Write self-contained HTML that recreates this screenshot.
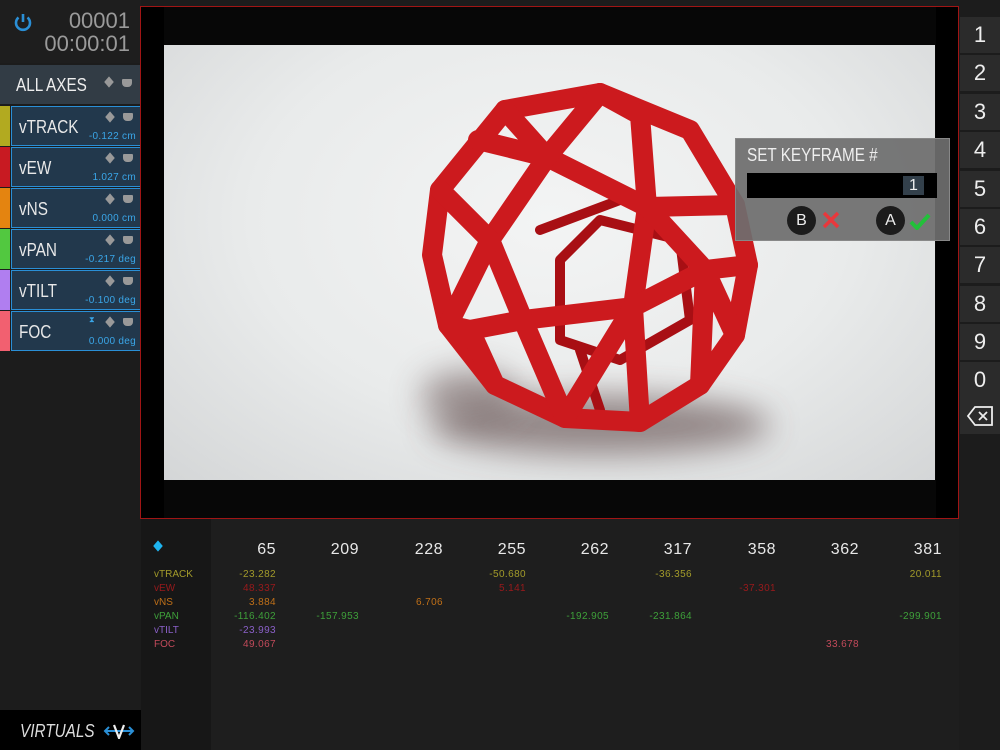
<!DOCTYPE html>
<html><head><meta charset="utf-8"><style>
*{margin:0;padding:0;box-sizing:border-box}
body{width:1000px;height:750px;background:#1c1c1c;position:relative;overflow:hidden;font-family:"Liberation Sans",sans-serif;}
.a{position:absolute}
.row{position:absolute;left:0;width:141px;height:40px}
.row .bar{position:absolute;left:0;top:0;width:10px;height:40px}
.row .box{position:absolute;left:11px;top:0;width:130px;height:40px;background:#22384c;border:1px solid #2a8fd6}
.row .lbl{position:absolute;left:7px;top:10px;color:#e8e8e8;font-size:18px;transform:scaleX(.85);transform-origin:left}
.row .val{position:absolute;right:4px;top:24px;color:#3aa6e8;font-size:10px;letter-spacing:.3px}
.dia{position:absolute;width:8px;height:8px;background:#999;transform:scaleX(.85) rotate(45deg)}
.sh{position:absolute;width:10px;height:8px;background:#999;border-radius:1px 1px 4px 4px}
.key{position:absolute;left:960px;width:40px;height:36px;background:#2b2b2b;color:#eee;font-size:22px;text-align:center;line-height:36px}
.h{position:absolute;top:541px;color:#e8e8e8;font-size:16px;text-align:right;width:60px;letter-spacing:.5px}
.d{position:absolute;font-size:10px;text-align:right;width:80px;letter-spacing:.4px}
.l{position:absolute;left:154px;font-size:10px}
</style></head><body>
<div class="a" style="left:0;top:0;width:141px;height:63px;background:#1e1e1e"></div>
<svg class="a" style="left:12px;top:12px" width="22" height="22" viewBox="0 0 22 22"><path d="M6.5 5.5A7 7 0 1 0 15.5 5.5" fill="none" stroke="#2a8fd6" stroke-width="2.6"/><line x1="11" y1="2" x2="11" y2="10" stroke="#2a8fd6" stroke-width="2.6"/></svg>
<div class="a" style="right:870px;top:9px;color:#9a9a9a;font-size:22px;line-height:23px;text-align:right;width:100px">00001<br>00:00:01</div>
<div class="a" style="left:0;top:65px;width:141px;height:39px;background:#323c45"></div>
<div class="a" style="left:16px;top:75px;color:#eee;font-size:18px;transform:scaleX(.85);transform-origin:left">ALL AXES</div>
<div class="dia" style="left:105px;top:78px"></div><div class="sh" style="left:122px;top:79px"></div>

<div class="row" style="top:106px"><div class="bar" style="background:#b2aa20"></div><div class="box"><div class="lbl">vTRACK</div><div class="val">-0.122 cm</div><div class="dia" style="left:94px;top:6px"></div><div class="sh" style="left:111px;top:6px"></div></div></div>
<div class="row" style="top:147px"><div class="bar" style="background:#c81a22"></div><div class="box"><div class="lbl">vEW</div><div class="val">1.027 cm</div><div class="dia" style="left:94px;top:6px"></div><div class="sh" style="left:111px;top:6px"></div></div></div>
<div class="row" style="top:188px"><div class="bar" style="background:#e48410"></div><div class="box"><div class="lbl">vNS</div><div class="val">0.000 cm</div><div class="dia" style="left:94px;top:6px"></div><div class="sh" style="left:111px;top:6px"></div></div></div>
<div class="row" style="top:229px"><div class="bar" style="background:#52c840"></div><div class="box"><div class="lbl">vPAN</div><div class="val">-0.217 deg</div><div class="dia" style="left:94px;top:6px"></div><div class="sh" style="left:111px;top:6px"></div></div></div>
<div class="row" style="top:270px"><div class="bar" style="background:#b07ef0"></div><div class="box"><div class="lbl">vTILT</div><div class="val">-0.100 deg</div><div class="dia" style="left:94px;top:6px"></div><div class="sh" style="left:111px;top:6px"></div></div></div>
<div class="row" style="top:311px"><div class="bar" style="background:#f26070"></div><div class="box"><div class="lbl">FOC</div><div class="val">0.000 deg</div><div class="a" style="left:77px;top:5px;color:#3aa6e8;font-size:8px;line-height:6px">⧗</div><div class="dia" style="left:94px;top:6px"></div><div class="sh" style="left:111px;top:6px"></div></div></div>

<div class="a" style="left:0;top:710px;width:141px;height:40px;background:#000"></div>
<div class="a" style="left:20px;top:721px;color:#ddd;font-size:18px;font-style:italic;transform:scaleX(.85);transform-origin:left">VIRTUALS</div>
<svg class="a" style="left:103px;top:723px" width="32" height="16" viewBox="0 0 32 16"><line x1="2" y1="8" x2="30" y2="8" stroke="#2a8fd6" stroke-width="2"/><path d="M6 4L2 8L6 12M26 4L30 8L26 12" fill="none" stroke="#2a8fd6" stroke-width="2"/><path d="M11 2L16 15L21 2" fill="none" stroke="#eee" stroke-width="2.2"/></svg>

<div class="a" style="left:140px;top:6px;width:819px;height:513px;border:1px solid #a01515;background:#000"></div>
<div class="a" style="left:164px;top:7px;width:772px;height:511px;background:#070707"></div>
<div class="a" style="left:164px;top:45px;width:771px;height:435px;background:radial-gradient(ellipse at 50% 40%,#f3f4f4 0%,#e9ebeb 55%,#d4d6d7 100%);overflow:hidden">
<svg width="771" height="435" viewBox="164 45 771 435">
<defs><filter id="b" x="-50%" y="-200%" width="200%" height="500%"><feGaussianBlur stdDeviation="16"/></filter></defs>
<ellipse cx="600" cy="425" rx="170" ry="30" fill="#5a4444" opacity=".6" filter="url(#b)"/>
<ellipse cx="470" cy="395" rx="50" ry="25" fill="#5a4444" opacity=".5" filter="url(#b)"/>
<g fill="none" stroke="#a80f14" stroke-width="10" stroke-linejoin="round" stroke-linecap="round">
<path d="M560,260 L600,220 L680,240 L690,320 L620,360 L560,340 Z M540,230 L620,200 M580,350 L600,410"/>
</g>
<g fill="none" stroke="#cc1a1e" stroke-width="20" stroke-linejoin="round" stroke-linecap="round">
<polygon points="440,190 505,110 600,93 690,130 735,205 748,265 735,335 700,385 640,422 565,418 495,385 448,325 432,255"/>
<polygon points="547,157 647,207 633,307 523,320 490,240"/>
<path d="M505,110 L547,157 L600,93 M600,93 L640,115 L647,207 L735,205 M647,207 L705,270 L735,335 M633,307 L705,270 L748,265 M633,307 L640,422 M633,307 L565,418 M523,320 L565,418 M523,320 L470,330 L448,325 M490,240 L440,190 M490,240 L448,325 M470,330 L495,385 M705,270 L700,385 M547,157 L478,140"/>
</g>
</svg></div>

<div class="a" style="left:735px;top:138px;width:215px;height:103px;background:rgba(110,110,110,.93);border:1px solid #888"></div>
<div class="a" style="left:747px;top:145px;color:#eee;font-size:18px;transform:scaleX(.85);transform-origin:left">SET KEYFRAME #</div>
<div class="a" style="left:747px;top:173px;width:190px;height:25px;background:#000"></div>
<div class="a" style="left:903px;top:176px;width:21px;height:19px;background:#33404b;color:#eee;font-size:16px;text-align:center;line-height:19px">1</div>
<div class="a" style="left:787px;top:206px;width:29px;height:29px;border-radius:50%;background:#1c1c1c;color:#eee;font-size:16px;text-align:center;line-height:29px">B</div>
<svg class="a" style="left:822px;top:211px" width="18" height="18"><path d="M2 2L16 16M16 2L2 16" stroke="#e8383c" stroke-width="3.5"/></svg>
<div class="a" style="left:876px;top:206px;width:29px;height:29px;border-radius:50%;background:#1c1c1c;color:#eee;font-size:16px;text-align:center;line-height:29px">A</div>
<svg class="a" style="left:909px;top:212px" width="22" height="18"><path d="M2 10L8 16L20 3" fill="none" stroke="#22c03a" stroke-width="4"/></svg>

<div class="a" style="left:959px;top:0;width:41px;height:750px;background:#1c1c1c"></div>
<div class="key" style="top:17px">1</div><div class="key" style="top:55px">2</div><div class="key" style="top:94px">3</div><div class="key" style="top:132px">4</div><div class="key" style="top:171px">5</div><div class="key" style="top:209px">6</div><div class="key" style="top:247px">7</div><div class="key" style="top:286px">8</div><div class="key" style="top:324px">9</div><div class="key" style="top:362px">0</div>
<div class="key" style="top:398px"><svg width="28" height="22" viewBox="0 0 28 22" style="margin-top:7px"><path d="M9 2H26V20H9L2 11Z" fill="none" stroke="#eee" stroke-width="1.8"/><path d="M13 7L21 15M21 7L13 15" stroke="#eee" stroke-width="1.8"/></svg></div>

<div class="a" style="left:141px;top:519px;width:70px;height:231px;background:#171717"></div>
<div class="a" style="left:211px;top:519px;width:748px;height:231px;background:#1e1e1e"></div>
<div class="a" style="left:154px;top:542px;width:8px;height:8px;background:#1eb4f0;transform:scaleX(.85) rotate(45deg)"></div>
<div class="h" style="left:216px">65</div><div class="h" style="left:299px">209</div><div class="h" style="left:383px">228</div><div class="h" style="left:466px">255</div><div class="h" style="left:549px">262</div><div class="h" style="left:632px">317</div><div class="h" style="left:716px">358</div><div class="h" style="left:799px">362</div><div class="h" style="left:882px">381</div>
<div class="l" style="top:569px;color:#a39b2a">vTRACK</div><div class="l" style="top:583px;color:#9a1a1c">vEW</div><div class="l" style="top:597px;color:#c07018">vNS</div><div class="l" style="top:611px;color:#3ea03a">vPAN</div><div class="l" style="top:625px;color:#8a60c8">vTILT</div><div class="l" style="top:639px;color:#c24a5a">FOC</div>
<div class="d" style="left:196px;top:569px;color:#a39b2a">-23.282</div><div class="d" style="left:446px;top:569px;color:#a39b2a">-50.680</div><div class="d" style="left:612px;top:569px;color:#a39b2a">-36.356</div><div class="d" style="left:862px;top:569px;color:#a39b2a">20.011</div>
<div class="d" style="left:196px;top:583px;color:#9a1a1c">48.337</div><div class="d" style="left:446px;top:583px;color:#9a1a1c">5.141</div><div class="d" style="left:696px;top:583px;color:#9a1a1c">-37.301</div>
<div class="d" style="left:196px;top:597px;color:#c07018">3.884</div><div class="d" style="left:363px;top:597px;color:#c07018">6.706</div>
<div class="d" style="left:196px;top:611px;color:#3ea03a">-116.402</div><div class="d" style="left:279px;top:611px;color:#3ea03a">-157.953</div><div class="d" style="left:529px;top:611px;color:#3ea03a">-192.905</div><div class="d" style="left:612px;top:611px;color:#3ea03a">-231.864</div><div class="d" style="left:862px;top:611px;color:#3ea03a">-299.901</div>
<div class="d" style="left:196px;top:625px;color:#8a60c8">-23.993</div>
<div class="d" style="left:196px;top:639px;color:#c24a5a">49.067</div><div class="d" style="left:779px;top:639px;color:#c24a5a">33.678</div>
</body></html>
